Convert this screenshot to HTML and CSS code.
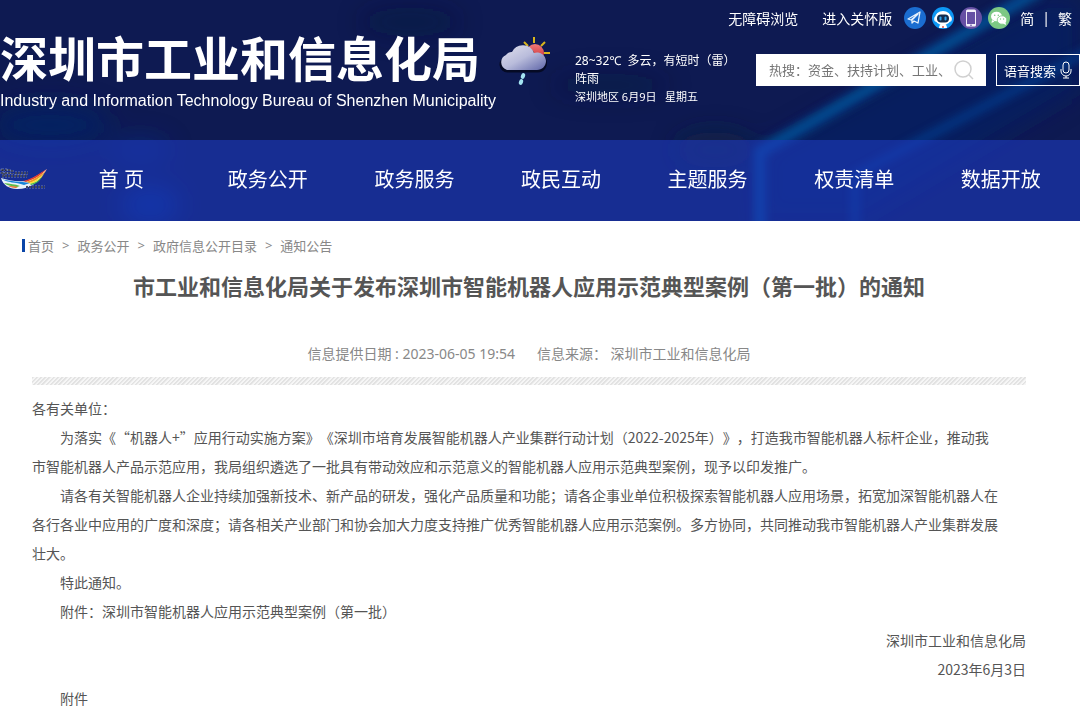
FILE: index.html
```
<!DOCTYPE html>
<html lang="zh-CN">
<head>
  <meta charset="UTF-8" />
  <meta name="viewport" content="width=device-width, initial-scale=1.0" />
  <title>市工业和信息化局关于发布深圳市智能机器人应用示范典型案例（第一批）的通知</title>
  <link rel="stylesheet" href="styles.css">
</head>
<body>
  <header class="site-header">
    <svg class="header-bg" viewBox="0 0 1080 221" preserveAspectRatio="none" aria-hidden="true">
      <defs>
        <filter id="soft" x="-20%" y="-20%" width="140%" height="140%"><feGaussianBlur stdDeviation="4" /></filter>
        <filter id="haze" x="-50%" y="-50%" width="200%" height="200%"><feGaussianBlur stdDeviation="12" /></filter>
      </defs>
      <g filter="url(#haze)">
        <ellipse cx="50" cy="125" rx="60" ry="22" fill="#04246a" opacity=".7" />
        <ellipse cx="150" cy="205" rx="30" ry="20" fill="#0038a8" opacity=".6" />
        <ellipse cx="140" cy="150" rx="30" ry="14" fill="#0038a8" opacity=".3" />
        <ellipse cx="410" cy="22" rx="50" ry="14" fill="#101f38" opacity=".4" />
        <ellipse cx="610" cy="85" rx="60" ry="12" fill="#101f38" opacity=".3" />
        <ellipse cx="715" cy="150" rx="40" ry="18" fill="#10283c" opacity=".6" />
        <path d="M760 221V150L1040 0h40v90L860 221z" fill="#04256c" opacity=".5" />
      </g>
      <g filter="url(#soft)" fill="none">
        <path d="M1040 -10L760 152V240" stroke="#06559f" stroke-width="12" opacity=".8" />
        <path d="M1100 45L855 175V240" stroke="#06459a" stroke-width="9" opacity=".6" />
      </g>
    </svg>

    <div class="header-top">
      <div class="brand">
        <h1>深圳市工业和信息化局</h1>
        <p>Industry and Information Technology Bureau of Shenzhen Municipality</p>
      </div>

      <div class="header-side">
        <div class="tools">
          <a href="#">无障碍浏览</a>
          <a href="#">进入关怀版</a>
          <div class="tool-icons">
            <a href="#" aria-label="邮件订阅">
              <svg viewBox="0 0 22 22">
                <circle cx="11" cy="11" r="11" fill="#1b6dd0" />
                <path d="M4 12L16 5l-2 11-4-2-2 2v-3l6-6-7 6z" fill="#1b6dd0" stroke="#e6f0fb" stroke-width="1.3" stroke-linejoin="round" />
              </svg>
            </a>
            <a href="#" aria-label="智能机器人">
              <svg viewBox="0 0 22 22">
                <circle cx="11" cy="11" r="11" fill="#0d97f5" />
                <path d="M7 21c0-3 2-5 4-5s4 2 4 5z" fill="#fff" />
                <rect x="2" y="9" width="18" height="6" rx="3" fill="#dfe9f5" />
                <ellipse cx="11" cy="11" rx="8" ry="7" fill="#fff" />
                <rect x="5" y="7.500" width="12" height="8" rx="4" fill="#142c4e" />
                <rect x="7.500" y="9.500" width="2" height="4" rx="1" fill="#2ea4f0" />
                <rect x="12.500" y="9.500" width="2" height="4" rx="1" fill="#2ea4f0" />
                <circle cx="11" cy="20" r="1" fill="#e2504c" />
              </svg>
            </a>
            <a href="#" aria-label="手机版">
              <svg viewBox="0 0 22 22">
                <circle cx="11" cy="11" r="11" fill="#6650a4" />
                <rect x="6" y="2.500" width="10" height="17" rx="1.500" fill="#f3f0fa" />
                <rect x="7" y="5" width="8" height="12" fill="#6650a4" />
                <path d="M10 18.200h2" stroke="#6650a4" />
              </svg>
            </a>
            <a href="#" aria-label="微信">
              <svg viewBox="0 0 22 22">
                <circle cx="11" cy="11" r="11" fill="#7cc884" />
                <path d="M4 13l-.500 3 3-1.500z" fill="#fff" />
                <ellipse cx="8.500" cy="9.500" rx="5.500" ry="4.800" fill="#fff" />
                <ellipse cx="14" cy="13" rx="4.800" ry="4.200" fill="#fff" stroke="#7cc884" stroke-width=".8" />
                <path d="M15 16.500l3 1.500-.500-3z" fill="#fff" />
                <g fill="#7cc884">
                  <circle cx="6.700" cy="8.200" r=".8" /><circle cx="10.300" cy="8.200" r=".8" />
                  <circle cx="12.500" cy="12" r=".7" /><circle cx="15.600" cy="12" r=".7" />
                </g>
              </svg>
            </a>
          </div>
          <div class="lang">
            <a href="#">简</a>
            <span>|</span>
            <a href="#">繁</a>
          </div>
        </div>

        <div class="header-row">
          <svg class="weather-icon" viewBox="0 0 54 50" aria-hidden="true">
            <defs>
              <linearGradient id="cloud" x1="0" y1="0" x2="1" y2="1">
                <stop offset="0" stop-color="#e2e2ee" />
                <stop offset=".5" stop-color="#b9bcdb" />
                <stop offset="1" stop-color="#5e65a8" />
              </linearGradient>
              <linearGradient id="sun" x1="0" y1="0" x2="0" y2="1">
                <stop offset="0" stop-color="#f07a78" />
                <stop offset="1" stop-color="#c41f28" />
              </linearGradient>
            </defs>
            <path d="M26 6l4 4M36 1v6M47 6l-4 4M46 17h6" stroke="#d8b51c" stroke-width="2" />
            <circle cx="37" cy="17" r="9" fill="url(#sun)" />
            <path d="M9 35.500a8 8 0 0 1-1-16 7 7 0 0 1 6-3 12 12 0 0 1 22 1 9 9 0 0 1 12 8c0 6-4 10-9 10z" fill="#050a24" transform="translate(1 1)" />
            <path d="M9 34a8 8 0 0 1-1-15 7 7 0 0 1 6-3 12 12 0 0 1 22 1 9 9 0 0 1 12 8c0 5-4 9-9 9z" fill="url(#cloud)" />
            <ellipse cx="25" cy="40" rx="2" ry="3" fill="#a4e4f2" transform="rotate(20 25 40)" />
            <ellipse cx="23" cy="46" rx="2" ry="3" fill="#a4e4f2" transform="rotate(20 23 46)" />
          </svg>
          <div class="weather">
            <p>28~32℃&nbsp; 多云，有短时（雷）阵雨</p>
            <p class="weather-date">深圳地区 6月9日&nbsp;&nbsp; 星期五</p>
          </div>
          <form class="search">
            <input type="text" placeholder="热搜：资金、扶持计划、工业、" aria-label="站内搜索">
            <button type="button" aria-label="搜索">
              <svg viewBox="0 0 20 20" fill="none" stroke="#d0d0d0" stroke-width="1.500">
                <circle cx="9" cy="9" r="8" />
                <path d="M15 15l4 4" />
              </svg>
            </button>
          </form>
          <button type="button" class="voice-btn">
            语音搜索
            <svg viewBox="0 0 12 18" fill="none" stroke="#fff">
              <rect x="3" y="1" width="6" height="11" rx="3" />
              <path d="M1 8v2a5 5 0 0 0 10 0V8M6 15v2M3 17h6" />
            </svg>
          </button>
        </div>
      </div>
    </div>

    <nav class="main-nav">
      <svg class="nav-logo" viewBox="0 0 48 24" aria-hidden="true">
        <path d="M1 11C3 18 9 22 17 22 31 22 39 15 47 2 38 8 32 12 25 14 16 15 8 13 1 11z" fill="#e8f2fa" />
        <path d="M47 2C37 8 30 13 23 14l3 1C35 12 41 8 47 2z" fill="#e5392c" />
        <path d="M46 4C39 9 33 13 26 15l3 1c7-2 12-6 17-12z" fill="#f29a1f" />
        <path d="M44 7c-5 5-9 7-15 9l2 1c6-2 10-5 13-10z" fill="#f6e330" />
        <path d="M42 10c-4 4-7 6-12 7l1 1c5-1 8-3 11-8z" fill="#3fb54a" />
        <path d="M2 12c8 3 18 2 28 4l-6 2C15 15 8 16 2 12z" fill="#1583d8" />
        <path d="M4 16c6 1 11 1 16 3l-3 1C11 19 8 19 4 16z" fill="#5dbb46" />
        <path d="M8 19c3 0 6 0 10 1l-2 1c-3 0-5-1-8-2z" fill="#ef6c2d" />
        <path d="M2 3h4v4H2zM9 2v5M12 3v4M15 6h13M2 9h25M26 20h19" fill="none" stroke="#b8c4dc" stroke-width="2.500" stroke-dasharray="2 1" />
        <path d="M2 3h4v4H2zM9 2v5M12 3v4M15 6h13M2 9h25M26 20h19" fill="none" stroke="#1a1f3a" stroke-width="1.500" stroke-dasharray="2 1" />
      </svg>
      <ul>
        <li><a href="#">首 页</a></li>
        <li><a href="#">政务公开</a></li>
        <li><a href="#">政务服务</a></li>
        <li><a href="#">政民互动</a></li>
        <li><a href="#">主题服务</a></li>
        <li><a href="#">权责清单</a></li>
        <li><a href="#">数据开放</a></li>
      </ul>
    </nav>
  </header>

  <main class="page">
    <div class="breadcrumb">
      <a href="#">首页</a>
      <span>&gt;</span>
      <a href="#">政务公开</a>
      <span>&gt;</span>
      <a href="#">政府信息公开目录</a>
      <span>&gt;</span>
      <a href="#">通知公告</a>
    </div>

    <article class="article">
      <h2>市工业和信息化局关于发布深圳市智能机器人应用示范典型案例（第一批）的通知</h2>
      <div class="meta">
        <span>信息提供日期 : 2023-06-05 19:54</span>
        <span>信息来源： 深圳市工业和信息化局</span>
      </div>
      <div class="divider"></div>
      <div class="content">
        <p class="salutation">各有关单位：</p>
        <p>为落实《“机器人+”应用行动实施方案》《深圳市培育发展智能机器人产业集群行动计划（2022-2025年）》，打造我市智能机器人标杆企业，推动我市智能机器人产品示范应用，我局组织遴选了一批具有带动效应和示范意义的智能机器人应用示范典型案例，现予以印发推广。</p>
        <p>请各有关智能机器人企业持续加强新技术、新产品的研发，强化产品质量和功能；请各企事业单位积极探索智能机器人应用场景，拓宽加深智能机器人在各行各业中应用的广度和深度；请各相关产业部门和协会加大力度支持推广优秀智能机器人应用示范案例。多方协同，共同推动我市智能机器人产业集群发展壮大。</p>
        <p>特此通知。</p>
        <p>附件：深圳市智能机器人应用示范典型案例（第一批）</p>
        <p class="sign">深圳市工业和信息化局</p>
        <p class="sign">2023年6月3日</p>
        <p>附件</p>
      </div>
    </article>
  </main>
</body>
</html>
```
FILE: styles.css
```
* {
  margin: 0;
  padding: 0;
  box-sizing: border-box;
}

body {
  background: #fff;
  font-family: "Noto Sans", "Noto Sans CJK SC", sans-serif;
  font-size: 14px;
  color: #555;
  text-spacing-trim: space-all;
}

a {
  color: inherit;
  text-decoration: none;
}

button,
input {
  font-family: inherit;
  border: none;
}

.site-header {
  position: relative;
  background: #0e1a52;
  color: #fff;
}

/* light streaks behind the header and the nav */
.header-bg {
  position: absolute;
  top: 0;
  left: 0;
  width: 100%;
  height: 100%;
}

.header-top {
  position: relative;
  display: flex;
  height: 140px;
}

/* the english line may run a little past the column */
.brand {
  flex: none;
  width: 484px;
  padding-top: 35px;
  white-space: nowrap;
}

.brand h1 {
  font-size: 48px;
  line-height: 48px;
  font-weight: 700;
}

.brand p {
  margin-top: 8px;
  font-family: "Liberation Sans", Arial, sans-serif;
  font-size: 16px;
  line-height: 20px;
}

.header-side {
  flex: 1;
  min-width: 0;
}

.tools {
  display: flex;
  justify-content: flex-end;
  align-items: center;
  height: 36px;
  padding-right: 8px;
}

.tools > a + a {
  margin-left: 24px;
}

.tool-icons {
  display: flex;
  gap: 6px;
  margin: 0 10px 0 12px;
}

.tool-icons svg {
  display: block;
  width: 22px;
  height: 22px;
}

.lang {
  display: flex;
  gap: 8px;
}

.header-row {
  display: flex;
}

.weather-icon {
  flex: none;
  width: 54px;
  height: 50px;
  margin-left: 14px;
}

.weather {
  flex: none;
  width: 170px;
  margin: 16px 11px 0 23px;
  font-size: 12px;
  line-height: 18px;
}

.weather-date {
  font-size: 11px;
}

.search {
  display: flex;
  flex: 1;
  min-width: 0;
  height: 32px;
  margin-top: 18px;
  background: #fff;
}

.search input {
  flex: 1;
  min-width: 0;
  padding-left: 13px;
  background: none;
  font-size: 13px;
}

.search input::placeholder {
  color: #757575;
}

.search button {
  width: 32px;
  background: none;
}

.search button svg {
  display: block;
  width: 20px;
  height: 20px;
}

.voice-btn {
  display: flex;
  align-items: center;
  justify-content: center;
  gap: 4px;
  flex: none;
  width: 84px;
  height: 32px;
  margin: 18px 0 0 10px;
  border: 1px solid #fff;
  background: none;
  color: #fff;
  font-size: 13px;
  white-space: nowrap;
}

.voice-btn svg {
  width: 12px;
  height: 18px;
}

.main-nav {
  position: relative;
  display: flex;
  align-items: center;
  height: 81px;
  padding: 0 6px 4px 0;
  background: rgba(30, 58, 190, 0.6);
}

.nav-logo {
  flex: none;
  width: 48px;
  height: 24px;
}

.main-nav ul {
  display: flex;
  flex: 1;
  list-style: none;
}

.main-nav li {
  flex: 1;
  text-align: center;
  font-size: 20px;
  white-space: nowrap;
}

.page {
  padding: 14px 54px 0 22px;
}

.breadcrumb {
  display: flex;
  align-items: center;
  gap: 8px;
  height: 20px;
  font-size: 13px;
  color: #888;
}

.breadcrumb::before {
  content: "";
  width: 3px;
  height: 13px;
  margin-right: -5px;
  background: #0a45a8;
}

.article {
  padding-left: 10px;
}

.article h2 {
  margin-top: 15px;
  font-size: 22px;
  line-height: 32px;
  font-weight: 700;
  text-align: center;
  color: #555;
}

.meta {
  display: flex;
  justify-content: center;
  gap: 22px;
  margin-top: 42px;
  line-height: 20px;
  color: #888;
}

.divider {
  height: 8px;
  margin-top: 13px;
  background: repeating-linear-gradient(135deg, #e2e2e2 0 1px, #f6f6f6 2px 3px);
}

/* CJK face first, so the quotes take a full width */
.content {
  margin-top: 9px;
  font-family: "Noto Sans CJK SC", sans-serif;
  line-height: 29px;
}

.content p {
  padding-right: 26px;
  text-indent: 2em;
}

.content .salutation {
  text-indent: 0;
}

.content .sign {
  padding-right: 0;
  text-align: right;
}
```
